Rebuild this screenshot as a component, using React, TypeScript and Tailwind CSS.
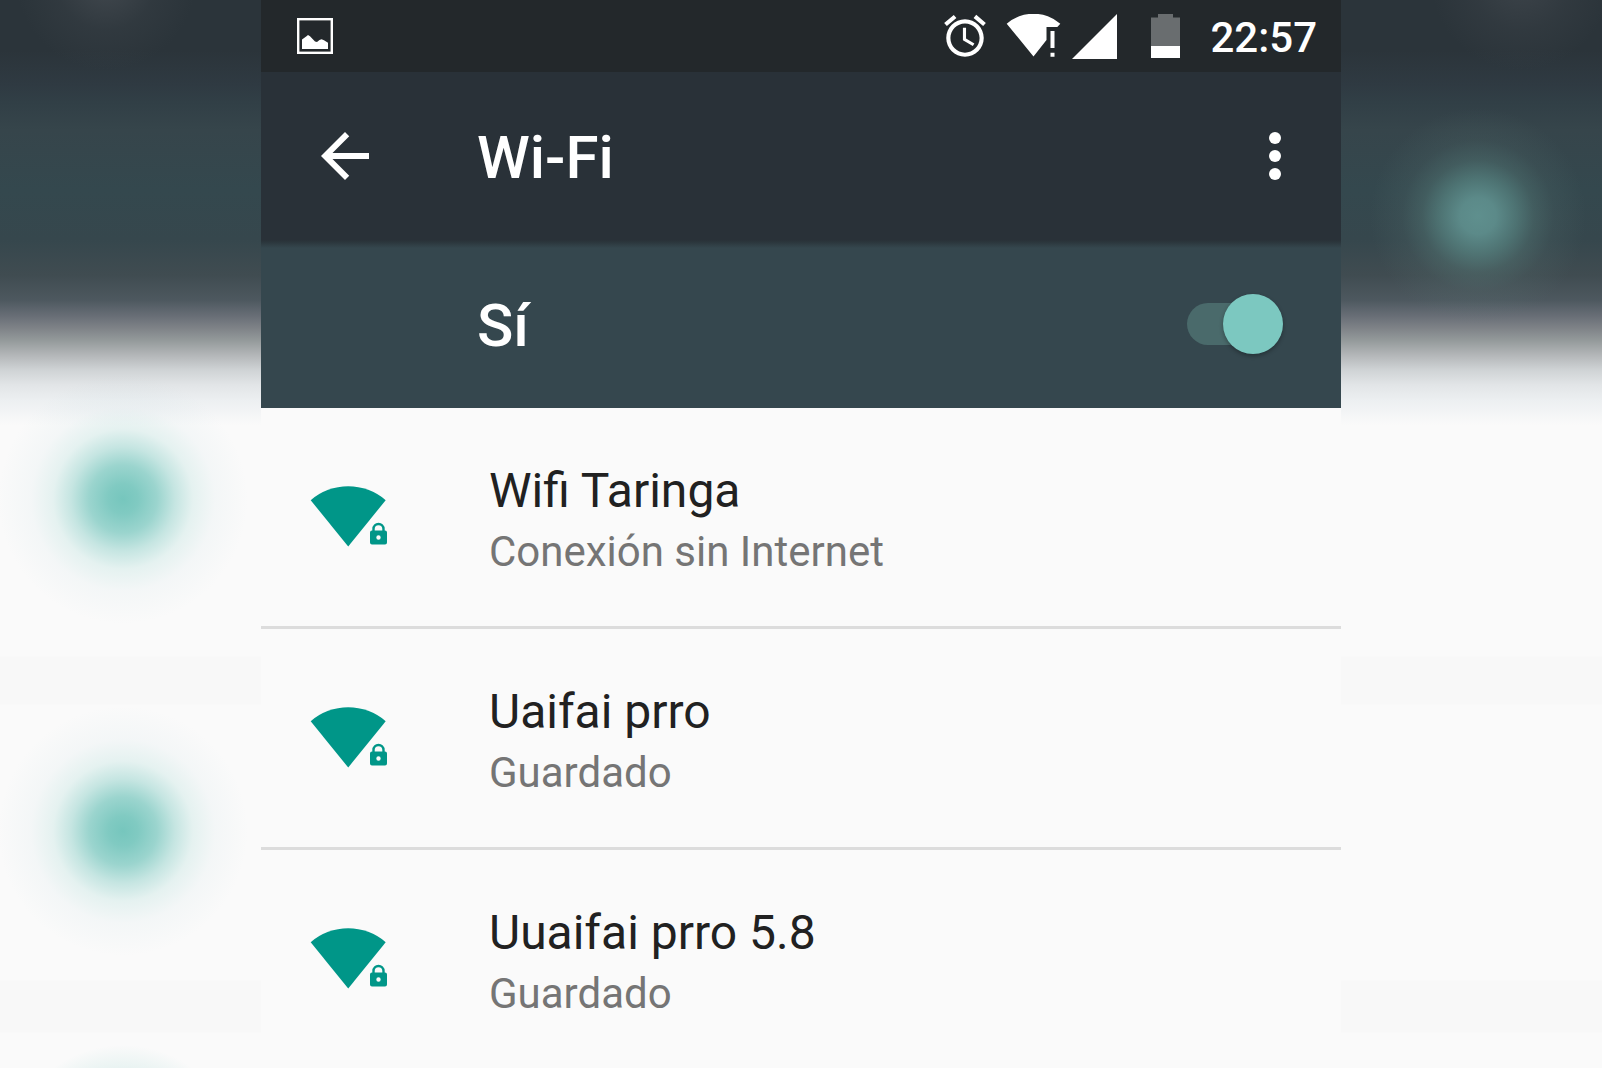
const networks = [
  { ssid: "Wifi Taringa", status: "Conexión sin Internet" },
  { ssid: "Uaifai prro", status: "Guardado" },
  { ssid: "Uuaifai prro 5.8", status: "Guardado" },
];

function StatusBar() {
  return (
    <div className="flex h-[72px] items-center bg-[#23282b] pr-6 pl-9 text-white">
      <svg className="size-9" viewBox="0 0 36 36" fill="none">
        <rect x="1.2" y="1.2" width="33.6" height="33.6" stroke="currentColor" strokeWidth="2.4" />
        <path
          d="M5 21.5L9.500 18.200L11 17L13 18.200L18 23.500L20 24L22.500 22L24.500 21.300L27 22.300L31 24.700V31H5z"
          fill="currentColor"
        />
      </svg>

      <div className="ml-auto flex items-center">
        {/* Alarm */}
        <svg className="size-[50px]" viewBox="0 0 24 24" fill="currentColor">
          <path d="M22 5.720l-4.600-3.860-1.290 1.530 4.600 3.860L22 5.720zM7.880 3.390L6.600 1.860 2 5.710l1.290 1.530 4.590-3.850zM12.500 8H11v6l4.750 2.850.75-1.230-4-2.370V8zM12 4c-4.970 0-9 4.030-9 9s4.020 9 9 9c4.970 0 9-4.030 9-9s-4.030-9-9-9zm0 16c-3.870 0-7-3.130-7-7s3.130-7 7-7 7 3.130 7 7-3.130 7-7 7z" />
        </svg>
        {/* Wi-Fi without internet */}
        <svg className="ml-4 h-11 w-[55px]" viewBox="0 0 55 44" fill="currentColor">
          <path d="M.7 9.700A41 41 0 0 1 54.300 9.700L51.300 13H40.500V26L27.500 42.500z" />
          <path d="M44.500 17h4v17h-4zM44.500 38.800h4v4h-4z" />
        </svg>
        {/* Mobile signal */}
        <svg className="ml-[11px] size-[45px]" viewBox="0 0 45 45" fill="currentColor">
          <path d="M45 0V45H0z" />
        </svg>
        {/* Battery */}
        <svg className="ml-[34px] h-11 w-[29px]" viewBox="0 0 29 44">
          <path d="M7 0H22V3.500H29V32H0V3.500H7z" fill="#696d6f" />
          <path d="M0 32H29V44H0z" fill="currentColor" />
        </svg>
        <span className="ml-[30px] pt-1 text-[42px] leading-none font-medium">22:57</span>
      </div>
    </div>
  );
}

function WifiLockIcon() {
  return (
    <svg className="h-[62px] w-20 shrink-0 text-[#009688]" viewBox="-1 0 80 62" fill="currentColor">
      <path d="M.7 14.200A57.200 57.200 0 0 1 75.700 14.200L38.200 60.500z" />
      <path d="M63.500 46V43a5 5 0 0 1 10 0V46" fill="none" stroke="currentColor" strokeWidth="2.4" />
      <path
        fillRule="evenodd"
        d="M62 44.500H75a2 2 0 0 1 2 2V56.500a2 2 0 0 1-2 2H62a2 2 0 0 1-2-2V46.500a2 2 0 0 1 2-2zM68.500 49.300a2.200 2.200 0 1 0 0 4.400a2.200 2.200 0 1 0 0-4.400z"
      />
    </svg>
  );
}

export default function App() {
  return (
    <div className="relative flex h-screen justify-center overflow-hidden bg-[#fafafa] font-['Roboto',sans-serif]">
      {/* Out-of-focus backdrop on both sides of the phone screen */}
      <div className="flex-1 bg-[radial-gradient(circle_at_123px_499px,rgba(118,198,189,1)_0px,rgba(118,198,189,0.92)_15px,rgba(118,198,189,0.72)_34px,rgba(118,198,189,0.4)_52px,rgba(118,198,189,0.16)_70px,rgba(140,190,200,0.06)_92px,rgba(140,190,200,0)_125px),radial-gradient(circle_at_123px_831px,rgba(118,198,189,1)_0px,rgba(118,198,189,0.92)_15px,rgba(118,198,189,0.72)_34px,rgba(118,198,189,0.4)_52px,rgba(118,198,189,0.16)_70px,rgba(140,190,200,0.06)_92px,rgba(140,190,200,0)_125px),radial-gradient(circle_at_123px_1163px,rgba(118,198,189,0.16)_90px,rgba(140,190,200,0)_118px),radial-gradient(circle_at_106px_-20px,rgba(72,78,84,0.8)_0px,rgba(72,78,84,0.2)_50px,rgba(72,78,84,0)_90px),linear-gradient(#2b343a_0px,#2b343a_50px,#2f3a42_85px,#313f46_102px,#36454b_130px,#34484e_190px,#36474d_240px,#404c51_275px,#4d585f_300px,#686e76_316px,#7e8287_328px,#93999a_340px,#b3b6b8_355px,#cfd3d5_370px,#e2e5e7_385px,#eceff1_400px,#fafafa_425px,#fafafa_656px,#f8f8f8_657px,#f8f8f8_704px,#fafafa_705px,#fafafa_980px,#f8f8f8_981px,#f8f8f8_1032px,#fafafa_1033px)]" />

      <main className="w-full max-w-[1080px] shrink-0 bg-[#fafafa]">
        <StatusBar />

        <header className="flex h-[168px] items-center bg-[#293138] pr-[30px] pl-12 text-white">
          <button type="button" aria-label="Atrás">
            <svg className="size-[72px]" viewBox="0 0 24 24" fill="currentColor">
              <path d="M20 11H7.830l5.590-5.590L12 4l-8 8 8 8 1.410-1.410L7.830 13H20v-2z" />
            </svg>
          </button>
          <h1 className="ml-24 pt-1 text-[60px] leading-none font-medium">Wi-Fi</h1>
          <button type="button" aria-label="Más opciones" className="ml-auto">
            <svg className="size-[72px]" viewBox="0 0 24 24" fill="currentColor">
              <circle cx="12" cy="6" r="2" />
              <circle cx="12" cy="12" r="2" />
              <circle cx="12" cy="18" r="2" />
            </svg>
          </button>
        </header>

        <div className="flex h-[168px] items-center justify-between bg-[#35474e] bg-[linear-gradient(#293138_0px,#2b363c_2px,#35474e_8px)] pr-[58px] pl-[216px] text-white">
          <label htmlFor="wifi-switch" className="pt-1 text-[60px] leading-none font-medium">
            Sí
          </label>
          <input
            id="wifi-switch"
            type="checkbox"
            role="switch"
            defaultChecked
            className="grid h-[60px] w-24 appearance-none items-center before:h-[42px] before:w-[86px] before:rounded-full before:bg-[#4a6a6b] before:[grid-area:1/1] after:size-[60px] after:rounded-full after:bg-[#7cc8c0] after:shadow-[0_2px_4px_rgba(0,0,0,0.3)] after:[grid-area:1/1] checked:after:justify-self-end"
          />
        </div>

        <ul className="divide-y-[3px] divide-[#dcdcdc]">
          {networks.map((network) => (
            <li key={network.ssid}>
              <button type="button" className="flex h-[218px] w-full items-center gap-[100px] pl-12 text-left">
                <WifiLockIcon />
                <span className="flex flex-col pt-0.5">
                  <span className="text-[48px] leading-[68px] text-[#212121]">{network.ssid}</span>
                  <span className="text-[42px] leading-[54px] text-[#757575]">{network.status}</span>
                </span>
              </button>
            </li>
          ))}
        </ul>
      </main>

      <div className="flex-1 bg-[radial-gradient(circle_at_137px_216px,rgba(97,147,145,0.95)_0px,rgba(97,147,145,0.88)_18px,rgba(93,142,138,0.62)_38px,rgba(90,130,126,0.36)_56px,rgba(88,118,116,0.16)_76px,rgba(88,118,116,0)_108px),radial-gradient(circle_at_180px_-20px,rgba(72,78,84,0.6)_0px,rgba(72,78,84,0.2)_50px,rgba(72,78,84,0)_90px),linear-gradient(#2b343a_0px,#2b343a_50px,#2f3a42_85px,#313f46_102px,#36454b_130px,#34484e_190px,#36474d_240px,#404c51_275px,#4d585f_300px,#686e76_316px,#7e8287_328px,#93999a_340px,#b3b6b8_355px,#cfd3d5_370px,#e2e5e7_385px,#eceff1_400px,#fafafa_425px,#fafafa_656px,#f8f8f8_657px,#f8f8f8_704px,#fafafa_705px,#fafafa_980px,#f8f8f8_981px,#f8f8f8_1032px,#fafafa_1033px)]" />
    </div>
  );
}
